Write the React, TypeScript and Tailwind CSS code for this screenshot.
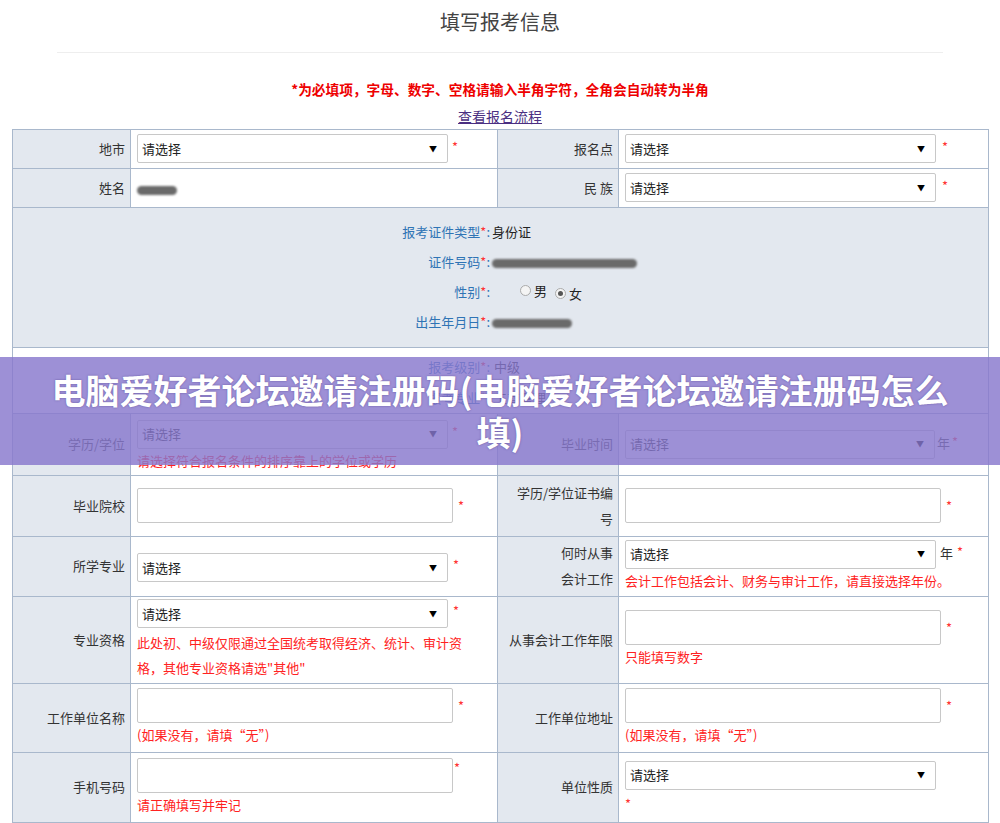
import React from 'react'

const font = { fontFamily: '"Microsoft YaHei", "Noto Sans CJK SC", "Liberation Sans", sans-serif' }

const Star = ({ className = '' }: { className?: string }) => (
    <span className={`text-[13px] text-[#f33] ${className}`}>*</span>
)

const Select = ({ w = 'w-[311px]' }: { w?: string }) => (
    <div className={`${w} flex h-[29px] items-center justify-between rounded-[2px] border border-[#c8c8c8] bg-white pl-[4px] pr-[10px] text-[13px] text-[#222]`}>
        <span>请选择</span>
        <span className="text-[8px] text-black">▼</span>
    </div>
)

const TextBox = () => (
    <div className="h-[35px] w-[316px] rounded-[2px] border border-[#c8c8c8] bg-white" />
)

const Hint = ({ children }: { children: React.ReactNode }) => (
    <div className="text-[13px] leading-[24px] text-[#f22]">{children}</div>
)

const Label = ({ children, h }: { children: React.ReactNode; h: string }) => (
    <td className={`${h} border border-[#a9b8cc] bg-[#e3e8ef] pr-[5px] text-right align-middle text-[13px] text-[#333]`}>{children}</td>
)

const Val = ({ children }: { children: React.ReactNode }) => (
    <td className="border border-[#a9b8cc] bg-white pl-[6px] align-middle">{children}</td>
)

const Blob = ({ w }: { w: string }) => (
    <span className={`inline-block h-[9px] ${w} rounded-full bg-[#6a6a6a] blur-[1px] align-middle`} />
)

const Radio = ({ on }: { on?: boolean }) => (
    <span className="inline-flex h-[11px] w-[11px] items-center justify-center rounded-full border border-[#aaa] bg-[#f4f4f4] align-middle">
        {on && <span className="h-[5px] w-[5px] rounded-full bg-[#555]" />}
    </span>
)

const InfoLine = ({ label, children }: { label: string; children: React.ReactNode }) => (
    <div className="flex h-[30px] items-center">
        <div className="w-[477px] text-right text-[13px] text-[#2f74b5]">{label}<span className="text-[#f33]">*</span>:</div>
        <div className="pl-[2px] text-[13px] text-[#222]">{children}</div>
    </div>
)

export default function App() {
    return (
        <div className="relative h-[823px] w-[1000px] overflow-hidden bg-white" style={font}>
            <div className="flex h-[52px] items-center justify-center pb-[8px] text-[20px] text-[#444]">填写报考信息</div>
            <div className="mx-[57px] h-px bg-[#eee]" />
            <div className="mt-[26px] text-center text-[13.7px] font-bold text-[#e00]">*为必填项，字母、数字、空格请输入半角字符，全角会自动转为半角</div>
            <div className="mt-[5px] text-center text-[14px] leading-[22px] text-[#4b2f82] underline">查看报名流程</div>

            <table className="mx-[12px] mt-[2px] w-[976px] table-fixed border-collapse">
                <colgroup>
                    <col className="w-[118px]" />
                    <col className="w-[367px]" />
                    <col className="w-[121px]" />
                    <col className="w-[370px]" />
                </colgroup>
                <tbody>
                    <tr>
                        <Label h="h-[39px]">地市</Label>
                        <Val><div className="flex items-start gap-[4px]"><Select /><Star className="mt-[3px]" /></div></Val>
                        <Label h="h-[39px]">报名点</Label>
                        <Val><div className="flex items-start gap-[6px]"><Select /><Star className="mt-[3px]" /></div></Val>
                    </tr>
                    <tr>
                        <Label h="h-[39px]">姓名</Label>
                        <Val><Blob w="w-[40px]" /></Val>
                        <Label h="h-[39px]">民 族</Label>
                        <Val><div className="flex items-start gap-[6px]"><Select /><Star className="mt-[3px]" /></div></Val>
                    </tr>
                    <tr>
                        <td colSpan={4} className="h-[140px] border border-[#a9b8cc] bg-[#e3e8ef] align-middle">
                            <div className="flex flex-col">
                                <InfoLine label="报考证件类型">身份证</InfoLine>
                                <InfoLine label="证件号码"><Blob w="w-[145px]" /></InfoLine>
                                <InfoLine label="性别">
                                    <span className="ml-[28px] inline-flex items-center gap-[3px]"><Radio />男</span>
                                    <span className="ml-[8px] inline-flex items-center gap-[3px]"><Radio on />女</span>
                                </InfoLine>
                                <InfoLine label="出生年月日"><Blob w="w-[80px]" /></InfoLine>
                            </div>
                        </td>
                    </tr>
                    <tr>
                        <td colSpan={4} className="h-[66px] border border-[#a9b8cc] bg-white align-top">
                            <div className="flex h-[38px] items-center">
                                <div className="w-[477px] text-right text-[13px] text-[#2f74b5]">报考级别<span className="text-[#f33]">*</span>:</div>
                                <div className="pl-[4px] text-[13px] text-[#222]">中级</div>
                            </div>
                            <div className="flex h-[24px] items-center">
                                <div className="w-[477px] text-right text-[13px] text-[#2f74b5]">报考专业<span className="text-[#f33]">*</span>:</div>
                                <div className="pl-[4px] text-[13px] text-[#222]">工商管理</div>
                            </div>
                        </td>
                    </tr>
                    <tr>
                        <Label h="h-[62px]">学历/学位</Label>
                        <Val>
                            <div className="flex items-start gap-[4px] pt-[4px]"><Select /><Star className="mt-[2px]" /></div>
                            <Hint>请选择符合报名条件的排序靠上的学位或学历</Hint>
                        </Val>
                        <Label h="h-[62px]">毕业时间</Label>
                        <Val><div className="flex items-start gap-[2px] text-[13px] text-[#333]"><Select w="w-[310px]" /><span className="leading-[26px]">年</span><Star className="mt-[2px]" /></div></Val>
                    </tr>
                    <tr>
                        <Label h="h-[61px]">毕业院校</Label>
                        <Val><div className="flex items-start gap-[5px]"><TextBox /><Star className="mt-[8px]" /></div></Val>
                        <Label h="h-[61px]"><div className="pl-[10px] leading-[26px]">学历/学位证书编号</div></Label>
                        <Val><div className="flex items-start gap-[5px]"><TextBox /><Star className="mt-[8px]" /></div></Val>
                    </tr>
                    <tr>
                        <Label h="h-[60px]">所学专业</Label>
                        <Val><div className="flex items-start gap-[5px] pt-[3px]"><Select /><Star className="mt-[2px]" /></div></Val>
                        <Label h="h-[60px]"><div className="pl-[56px] leading-[26px]">何时从事会计工作</div></Label>
                        <Val>
                            <div className="flex items-start gap-[4px] text-[13px] text-[#333]"><Select /><span className="leading-[26px]">年</span><Star className="mt-[2px]" /></div>
                            <Hint>会计工作包括会计、财务与审计工作，请直接选择年份。</Hint>
                        </Val>
                    </tr>
                    <tr>
                        <Label h="h-[87px]">专业资格</Label>
                        <Val>
                            <div className="flex items-start gap-[5px]"><Select /><Star className="mt-[2px]" /></div>
                            <div className="pr-[10px] pt-[2px] text-[13px] leading-[25px] text-[#f22]">此处初、中级仅限通过全国统考取得经济、统计、审计资格，其他专业资格请选"其他"</div>
                        </Val>
                        <Label h="h-[87px]">从事会计工作年限</Label>
                        <Val>
                            <div className="flex items-start gap-[5px]"><TextBox /><Star className="mt-[8px]" /></div>
                            <Hint>只能填写数字</Hint>
                        </Val>
                    </tr>
                    <tr>
                        <Label h="h-[69px]">工作单位名称</Label>
                        <Val>
                            <div className="flex items-start gap-[5px]"><TextBox /><Star className="mt-[8px]" /></div>
                            <Hint>(如果没有，请填“无”)</Hint>
                        </Val>
                        <Label h="h-[69px]">工作单位地址</Label>
                        <Val>
                            <div className="flex items-start gap-[5px]"><TextBox /><Star className="mt-[8px]" /></div>
                            <Hint>(如果没有，请填“无”)</Hint>
                        </Val>
                    </tr>
                    <tr>
                        <Label h="h-[70px]">手机号码</Label>
                        <Val>
                            <div className="flex items-start gap-[1px]"><TextBox /><Star /></div>
                            <Hint>请正确填写并牢记</Hint>
                        </Val>
                        <Label h="h-[70px]">单位性质</Label>
                        <Val>
                            <Select />
                            <Star />
                        </Val>
                    </tr>
                </tbody>
            </table>

            <div className="absolute left-0 top-[357px] flex h-[108px] w-[1000px] items-center justify-center bg-[rgba(135,120,205,0.82)]">
                <div className="w-[912px] text-center text-[34px] font-bold leading-[42px] text-white [text-shadow:0_0_2px_rgba(60,40,120,0.6)]">
                    电脑爱好者论坛邀请注册码(电脑爱好者论坛邀请注册码怎么填)
                </div>
            </div>
        </div>
    )
}
